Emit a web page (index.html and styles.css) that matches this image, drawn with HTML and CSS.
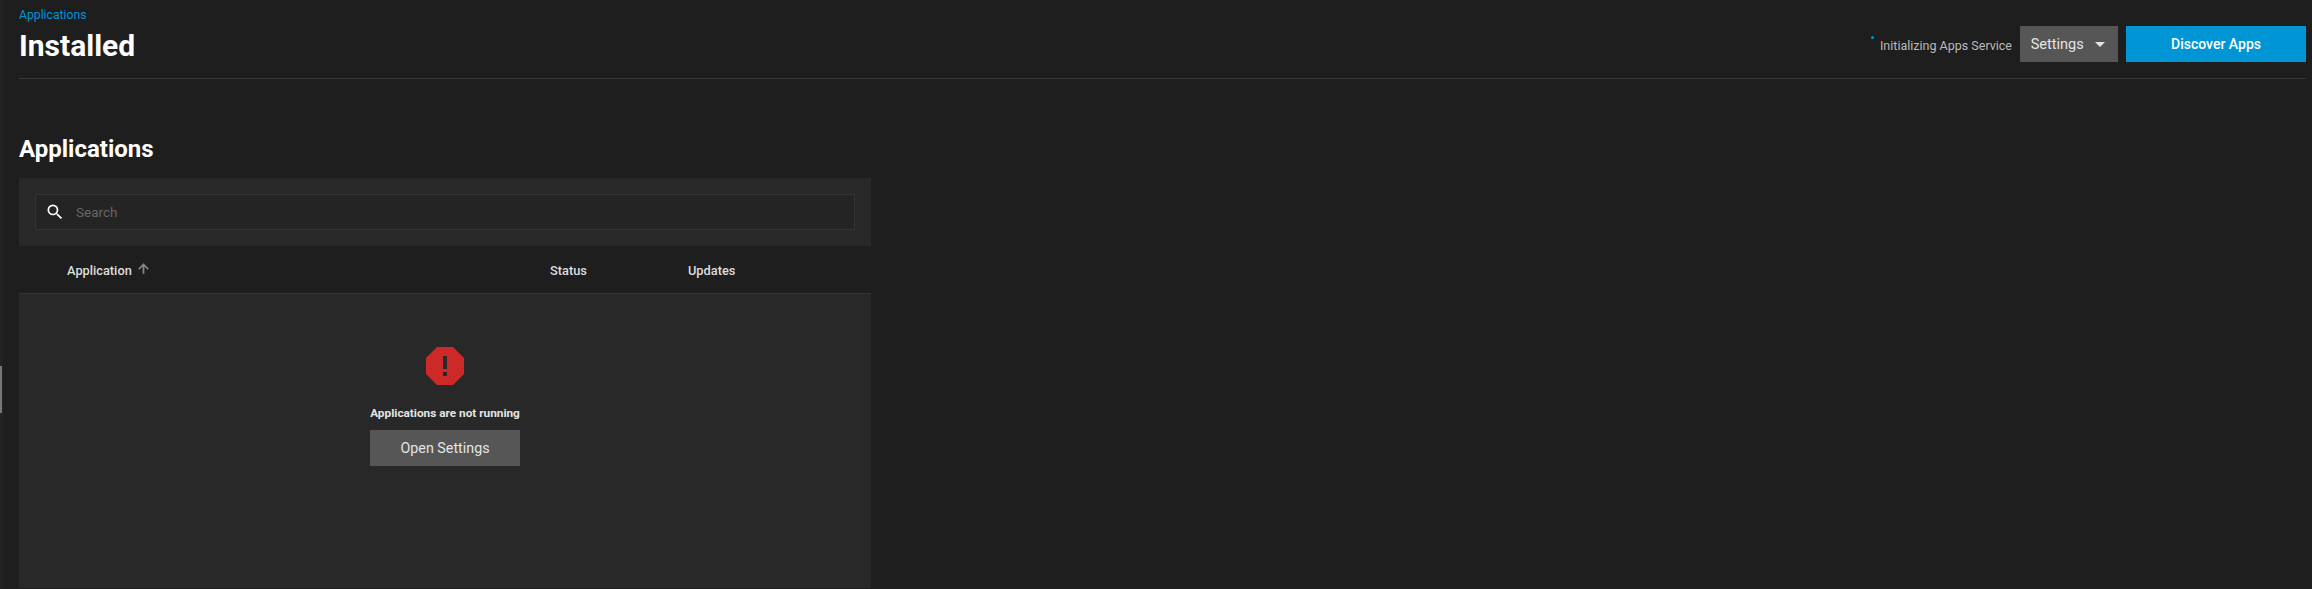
FILE: index.html
```html
<!DOCTYPE html>
<html lang="en">
<head>
    <meta charset="UTF-8">
    <title>Installed - Applications</title>
    <link rel="stylesheet" href="styles.css">
</head>
<body>
    <div class="rail"><div class="rail-thumb"></div></div>
    <main class="content">
        <header class="page-header">
            <div class="titles">
                <a class="crumb">Applications</a>
                <h1>Installed</h1>
            </div>
            <div class="actions">
                <div class="status">
                    <span class="status-dot"></span>
                    <span class="status-text">Initializing Apps Service</span>
                </div>
                <button class="btn btn-settings">Settings <span class="caret"></span></button>
                <button class="btn btn-primary">Discover Apps</button>
            </div>
        </header>

        <section class="apps">
            <h2>Applications</h2>
            <div class="search-bar">
                <div class="search-box">
                    <svg class="search-icon" viewBox="0 0 24 24"><path fill="#fff" d="M15.5 14h-.79l-.28-.27A6.47 6.47 0 0 0 16 9.5 6.5 6.5 0 1 0 9.5 16c1.61 0 3.09-.59 4.23-1.57l.27.28v.79l5 4.99L20.49 19l-4.99-5zm-6 0C7.01 14 5 11.99 5 9.5S7.01 5 9.5 5 14 7.01 14 9.5 11.99 14 9.5 14z"/></svg>
                    <span class="placeholder">Search</span>
                </div>
            </div>
            <div class="table-head">
                <span class="col-app">Application
                    <svg class="sort-icon" viewBox="0 0 24 24"><path fill="#888" stroke="#888" stroke-width="0.8" d="M4 12l1.41 1.41L11 7.83V20h2V7.83l5.58 5.59L20 12l-8-8-8 8z"/></svg>
                </span>
                <span class="col-status">Status</span>
                <span class="col-updates">Updates</span>
            </div>
            <div class="table-body">
                <svg class="error-icon" viewBox="0 0 38 38">
                    <polygon fill="#ce2929" points="11,0 27,0 38,11 38,27 27,38 11,38 0,27 0,11"/>
                    <rect fill="#282828" x="17" y="9" width="4" height="13"/>
                    <rect fill="#282828" x="17" y="25" width="4" height="4"/>
                </svg>
                <p class="empty-title">Applications are not running</p>
                <button class="btn btn-open">Open Settings</button>
            </div>
        </section>
    </main>
</body>
</html>
```

FILE: styles.css
```css
html, body {
    height: 100%;
}
body {
    margin: 0;
    background: #1e1e1e;
    color: #fff;
    font-family: Roboto, sans-serif;
    display: flex;
    overflow: hidden;
}
.rail {
    width: 3px;
    background: #232323;
    position: relative;
    flex: none;
}
.rail-thumb {
    position: absolute;
    top: 366px;
    left: 0;
    width: 2px;
    height: 47px;
    background: #777;
}
.content {
    flex: 1;
    padding: 0 6px 0 16px;
    min-width: 0;
}
.page-header {
    height: 78px;
    border-bottom: 1px solid #383838;
    display: flex;
    justify-content: space-between;
}
.titles {
    padding-top: 6px;
}
.crumb {
    display: block;
    color: #0095d5;
    font-size: 12.2px;
    line-height: 18px;
}
h1 {
    margin: 3px 0 0;
    font-size: 30px;
    line-height: 38px;
    font-weight: 700;
}
.actions {
    display: flex;
    align-items: flex-start;
    padding-top: 26px;
}
.status {
    display: flex;
    align-items: flex-start;
    margin-right: 8px;
}
.status-dot {
    width: 3px;
    height: 3px;
    margin: 10px 6px 0 0;
    border-radius: 50%;
    background: #0095d5;
}
.status-text {
    color: #bbb;
    font-size: 12.5px;
    line-height: 36px;
    padding-top: 2px;
}
.btn {
    border: none;
    color: #fff;
    font-family: Roboto, sans-serif;
    font-size: 14px;
    height: 36px;
    padding: 0;
}
.btn-settings {
    width: 98px;
    background: #565656;
    color: #e4e4e4;
    font-size: 14.5px;
    margin-right: 8px;
    padding-right: 2px;
}
.caret {
    display: inline-block;
    width: 0;
    height: 0;
    margin-left: 8px;
    vertical-align: middle;
    border-left: 5px solid transparent;
    border-right: 5px solid transparent;
    border-top: 5px solid #e4e4e4;
}
.btn-primary {
    width: 180px;
    background: #0095d5;
    font-weight: 500;
}
.apps {
    width: 852px;
    padding-top: 51px;
}
h2 {
    margin: 0 0 10px;
    font-size: 24px;
    line-height: 38px;
    font-weight: 700;
}
.search-bar {
    background: #282828;
    padding: 16px;
    height: 36px;
    display: flex;
}
.search-box {
    flex: 1;
    background: #242424;
    border: 1px solid #333;
    box-sizing: border-box;
    height: 36px;
    display: flex;
    align-items: center;
    padding-left: 9px;
}
.search-icon {
    width: 20px;
    height: 20px;
    margin-right: 11px;
}
.placeholder {
    color: #666;
    font-size: 13.5px;
}
.table-head {
    height: 47px;
    padding-top: 2px;
    box-sizing: border-box;
    display: grid;
    grid-template-columns: 483px 138px 1fr;
    padding-left: 48px;
    align-items: center;
    font-size: 12.8px;
    font-weight: 500;
    color: #ddd;
}
.col-app {
    display: flex;
    align-items: center;
    gap: 4px;
}
.sort-icon {
    width: 15px;
    height: 15px;
    margin-top: -4px;
}
.table-body {
    background: #282828;
    border-top: 1px solid #333;
    height: 295px;
    box-sizing: border-box;
    display: flex;
    flex-direction: column;
    align-items: center;
    padding-top: 53px;
}
.error-icon {
    width: 38px;
    height: 38px;
}
.empty-title {
    margin: 20px 0 0;
    font-size: 11.8px;
    line-height: 16px;
    font-weight: 700;
    color: #e4e4e4;
}
.btn-open {
    width: 150px;
    margin-top: 9px;
    background: #565656;
    color: #e4e4e4;
    font-size: 14.3px;
}
```
